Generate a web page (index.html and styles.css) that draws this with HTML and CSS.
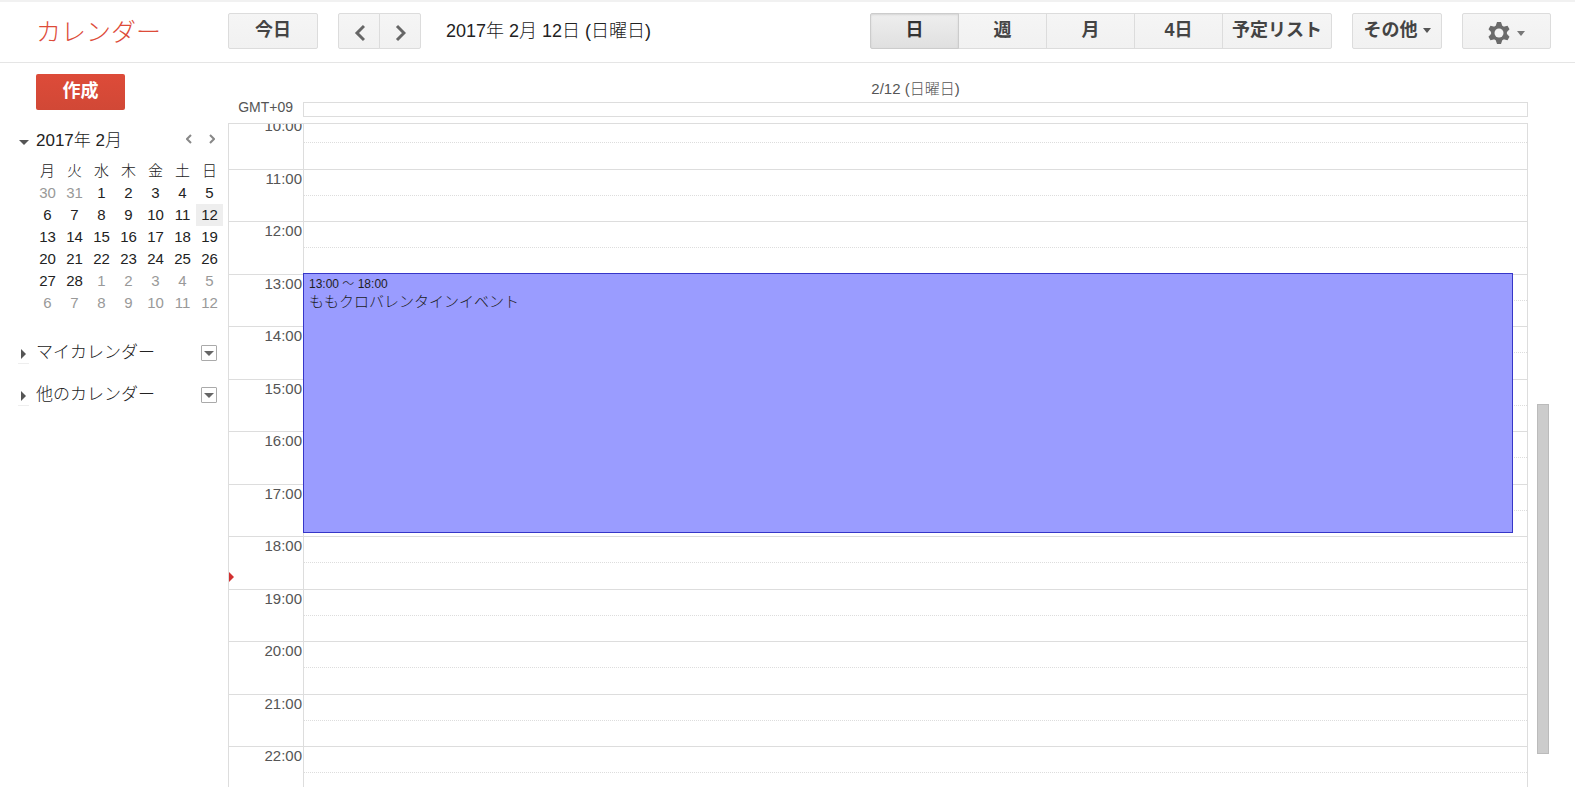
FILE: index.html
```html
<!DOCTYPE html>
<html lang="ja">
<head>
  <meta charset="UTF-8">
  <title>カレンダー</title>
  <link rel="stylesheet" href="styles.css">
</head>
<body>

  <header class="topbar">
    <h1 class="logo">カレンダー</h1>
    <button class="btn today">今日</button>
    <div class="btn-group pager">
      <button class="btn icon-btn" aria-label="前へ">
        <svg width="12" height="18" viewBox="0 0 12 18"><path d="M11 2L4 9l7 7" fill="none" stroke="#666" stroke-width="3"/></svg>
      </button>
      <button class="btn icon-btn" aria-label="次へ">
        <svg width="12" height="18" viewBox="0 0 12 18"><path d="M3 2l7 7-7 7" fill="none" stroke="#666" stroke-width="3"/></svg>
      </button>
    </div>
    <div class="current-date">2017年 2月 12日 (日曜日)</div>

    <div class="btn-group views">
      <button class="btn active">日</button>
      <button class="btn">週</button>
      <button class="btn">月</button>
      <button class="btn">4日</button>
      <button class="btn agenda">予定リスト</button>
    </div>
    <button class="btn more">その他
      <svg width="8" height="5" viewBox="0 0 8 5"><path d="M0 0h8L4 5z" fill="#555"/></svg>
    </button>
    <button class="btn icon-btn settings" aria-label="設定">
      <svg width="22" height="22" viewBox="0 0 22 22">
        <g fill="#6b6b6b">
          <path d="M8 3l1-3h4l1 3v16l-1 3H9l-1-3z"/>
          <path d="M8 3l1-3h4l1 3v16l-1 3H9l-1-3z" transform="rotate(60 11 11)"/>
          <path d="M8 3l1-3h4l1 3v16l-1 3H9l-1-3z" transform="rotate(120 11 11)"/>
          <circle cx="11" cy="11" r="8"/>
        </g>
        <circle cx="11" cy="11" r="4.5" fill="#f3f3f3"/>
      </svg>
      <svg width="8" height="5" viewBox="0 0 8 5"><path d="M0 0h8L4 5z" fill="#777"/></svg>
    </button>
  </header>

  <div class="main">
    <!-- Sidebar -->
    <aside class="sidebar">
      <button class="create">作成</button>

      <div class="month-head">
        <button class="toggle" aria-label="折りたたむ">
          <svg width="10" height="5" viewBox="0 0 10 5"><path d="M0 0h10L5 5z" fill="#555"/></svg>
        </button>
        <h2>2017年 2月</h2>
        <button class="month-nav" aria-label="前の月">
          <svg width="6" height="10" viewBox="0 0 6 10"><path d="M5 1L1 5l4 4" fill="none" stroke="#888" stroke-width="2"/></svg>
        </button>
        <button class="month-nav" aria-label="次の月">
          <svg width="6" height="10" viewBox="0 0 6 10"><path d="M1 1l4 4-4 4" fill="none" stroke="#888" stroke-width="2"/></svg>
        </button>
      </div>

      <table class="mini">
        <thead>
          <tr><th>月</th><th>火</th><th>水</th><th>木</th><th>金</th><th>土</th><th>日</th></tr>
        </thead>
        <tbody>
          <tr><td class="other">30</td><td class="other">31</td><td>1</td><td>2</td><td>3</td><td>4</td><td>5</td></tr>
          <tr><td>6</td><td>7</td><td>8</td><td>9</td><td>10</td><td>11</td><td class="selected">12</td></tr>
          <tr><td>13</td><td>14</td><td>15</td><td>16</td><td>17</td><td>18</td><td>19</td></tr>
          <tr><td>20</td><td>21</td><td>22</td><td>23</td><td>24</td><td>25</td><td>26</td></tr>
          <tr><td>27</td><td>28</td><td class="other">1</td><td class="other">2</td><td class="other">3</td><td class="other">4</td><td class="other">5</td></tr>
          <tr class="other"><td>6</td><td>7</td><td>8</td><td>9</td><td>10</td><td>11</td><td>12</td></tr>
        </tbody>
      </table>

      <div class="cal-list">
        <button class="toggle closed" aria-label="マイカレンダーを開く">
          <svg width="5" height="10" viewBox="0 0 5 10"><path d="M0 0v10l5-5z" fill="#555"/></svg>
        </button>
        <h2>マイカレンダー</h2>
        <button class="menu-btn" aria-label="マイカレンダーのメニュー">
          <svg width="10" height="5" viewBox="0 0 10 5"><path d="M0 0h10L5 5z" fill="#666"/></svg>
        </button>
      </div>
      <div class="cal-list">
        <button class="toggle closed" aria-label="他のカレンダーを開く">
          <svg width="5" height="10" viewBox="0 0 5 10"><path d="M0 0v10l5-5z" fill="#555"/></svg>
        </button>
        <h2>他のカレンダー</h2>
        <button class="menu-btn" aria-label="他のカレンダーのメニュー">
          <svg width="10" height="5" viewBox="0 0 10 5"><path d="M0 0h10L5 5z" fill="#666"/></svg>
        </button>
      </div>
    </aside>

    <!-- Day view -->
    <section class="day-view">
      <div class="day-head">
        <div class="timezone">GMT+09</div>
        <div class="day-col-head">
          <div class="day-name">2/12 (日曜日)</div>
          <div class="all-day"></div>
        </div>
      </div>

      <div class="scroll-row">
        <div class="scroll-area">
          <div class="hours">
            <div>10:00</div>
            <div>11:00</div>
            <div>12:00</div>
            <div>13:00</div>
            <div>14:00</div>
            <div>15:00</div>
            <div>16:00</div>
            <div>17:00</div>
            <div>18:00</div>
            <div>19:00</div>
            <div>20:00</div>
            <div>21:00</div>
            <div>22:00</div>
            <div></div>
            <svg class="now" width="5" height="10" viewBox="0 0 5 10"><path d="M0 0v10l5-5z" fill="#d23030"/></svg>
          </div>
          <div class="slots">
            <!-- two half hours per label -->
            <div></div><div></div>
            <div></div><div></div>
            <div></div><div></div>
            <div></div><div></div>
            <div></div><div></div>
            <div></div><div></div>
            <div></div><div></div>
            <div></div><div></div>
            <div></div><div></div>
            <div></div><div></div>
            <div></div><div></div>
            <div></div><div></div>
            <div></div><div></div>
            <div></div><div></div>
            <a class="event" href="#">
              <span class="event-time">13:00 ～ 18:00</span>
              <span class="event-title">ももクロバレンタインイベント</span>
            </a>
          </div>
        </div>
        <div class="scrollbar">
          <div class="thumb"></div>
        </div>
      </div>
    </section>
  </div>

</body>
</html>
```

FILE: styles.css
```css
* {
  box-sizing: border-box;
}

body {
  margin: 0;
  height: 100vh;
  display: flex;
  flex-direction: column;
  overflow: hidden;
  background: #fff;
  color: #222;
  font-family: "Liberation Sans", "Noto Sans CJK JP", sans-serif;
  font-size: 15px;
  font-weight: 300;
}

h1, h2 {
  margin: 0;
  font-weight: 300;
}

button {
  padding: 0;
  border: none;
  background: none;
  font-family: inherit;
  cursor: pointer;
}

svg {
  display: block;
  flex: none;
}

/* Top bar */
.topbar {
  display: flex;
  align-items: center;
  height: 63px;
  flex: none;
  padding: 0 24px 2px 36px;
  border-top: 2px solid #f1f1f1;
  border-bottom: 1px solid #e5e5e5;
}

.logo {
  width: 192px;
  padding-top: 2px;
  color: #dd4b39;
  font-size: 25px;
  line-height: 36px;
}

.btn {
  display: flex;
  align-items: center;
  justify-content: center;
  gap: 5px;
  height: 36px;
  padding-bottom: 2px;
  border: 1px solid #dcdcdc;
  border-radius: 2px;
  background: linear-gradient(#f5f5f5, #f1f1f1);
  color: #444;
  font-size: 18px;
  font-weight: bold;
  line-height: 24px;
  white-space: nowrap;
}

.btn-group {
  display: flex;
}

.btn-group .btn {
  width: 89px;
  border-radius: 0;
}

.btn-group .btn + .btn {
  margin-left: -1px;
}

.btn-group .btn:first-child {
  border-radius: 2px 0 0 2px;
}

.btn-group .btn:last-child {
  border-radius: 0 2px 2px 0;
}

.btn.icon-btn {
  padding: 4px 0 0;
}

.btn.active {
  position: relative;
  border-color: #ccc;
  background: linear-gradient(#eee, #e0e0e0);
  box-shadow: inset 0 1px 2px rgba(0, 0, 0, 0.1);
  color: #333;
}

.today,
.more {
  width: 90px;
}

.settings {
  width: 89px;
  gap: 7px;
}

.pager {
  margin-left: 20px;
}

.pager .btn {
  width: 42px;
}

.current-date {
  margin-left: 25px;
  padding-bottom: 4px;
  font-size: 18px;
  white-space: nowrap;
}

.views {
  margin-left: auto;
}

.btn-group .agenda {
  width: 110px;
}

.more,
.settings {
  margin-left: 20px;
}

/* Sidebar */
.main {
  display: flex;
  flex: 1;
  min-height: 0;
}

.sidebar {
  width: 228px;
  flex: none;
  padding-top: 11px;
}

.create {
  display: block;
  width: 89px;
  height: 36px;
  margin-left: 36px;
  padding-bottom: 2px;
  border-radius: 2px;
  background: linear-gradient(#dd4b39, #d14836);
  color: #fff;
  font-size: 18px;
  font-weight: bold;
  line-height: 24px;
}

.month-head,
.cal-list {
  display: flex;
  align-items: center;
  height: 24px;
  padding: 0 11px 0 18px;
}

.month-head {
  margin-top: 19px;
}

.month-head h2,
.cal-list h2 {
  flex: 1;
  font-size: 17px;
  line-height: 24px;
}

.toggle {
  display: flex;
  justify-content: center;
  width: 11px;
  margin-right: 7px;
  padding: 7px 0 4px;
}

.toggle.closed {
  border-bottom: 1px solid #eee;
}

.month-nav {
  display: flex;
  justify-content: center;
  width: 23px;
  padding-bottom: 4px;
}

.month-head {
  padding-right: 5px;
}

.mini {
  margin: 7px 0 27px 34px;
  border-collapse: collapse;
  table-layout: fixed;
  width: 189px;
}

.mini th,
.mini td {
  height: 22px;
  padding: 0;
  font-size: 15px;
  font-weight: 300;
  line-height: 22px;
  text-align: center;
}

.mini .other {
  color: #999;
}

.mini .selected {
  background: #eee;
}

.cal-list {
  margin-bottom: 18px;
}

.menu-btn {
  display: flex;
  align-items: center;
  justify-content: center;
  width: 16px;
  height: 16px;
  border: 1px solid #aaa;
  border-radius: 1px;
}

/* Day view */
.day-view {
  display: flex;
  flex-direction: column;
  flex: 1;
  min-width: 0;
  color: #555;
}

.day-head {
  display: flex;
  align-items: flex-end;
  padding: 16px 47px 6px 0;
}

.timezone {
  width: 75px;
  padding-right: 10px;
  font-size: 14px;
  line-height: 20px;
  text-align: right;
}

.day-col-head {
  flex: 1;
}

.day-name {
  line-height: 20px;
  margin-bottom: 3px;
  text-align: center;
}

.all-day {
  height: 15px;
  border: 1px solid #ddd;
}

.scroll-row {
  display: flex;
  flex: 1;
  min-height: 0;
}

.scroll-area {
  display: flex;
  align-items: flex-start;
  flex: 1;
  overflow: hidden;
  border: 1px solid #ddd;
  border-bottom: none;
}

.hours,
.slots {
  position: relative;
  display: grid;
  grid-auto-rows: 1fr;
  height: 735px;
  margin-top: -8px;
}

.hours {
  width: 74px;
}

.hours div {
  padding-right: 1px;
  border-top: 1px solid #ddd;
  line-height: 17px;
  text-align: right;
}

.now {
  position: absolute;
  left: 0;
  top: 456px;
}

.slots {
  flex: 1;
  border-left: 1px solid #ddd;
}

.slots div {
  border-top: 1px solid #ddd;
}

.slots div:nth-child(even) {
  border-top-style: dotted;
}

.event {
  position: absolute;
  top: 157px;
  left: -1px;
  right: 14px;
  height: 260px;
  padding: 2px 5px;
  border: 1px solid #3636c8;
  background: #9a9cff;
  color: #1d1d1d;
  text-decoration: none;
}

.event span {
  display: block;
}

.event-time {
  font-size: 12px;
  line-height: 17px;
}

.event-title {
  line-height: 18px;
}

.scrollbar {
  width: 47px;
  padding: 281px 26px 33px 9px;
}

.thumb {
  height: 100%;
  background: #ccc;
  border: 1px solid #bbb;
}
```
